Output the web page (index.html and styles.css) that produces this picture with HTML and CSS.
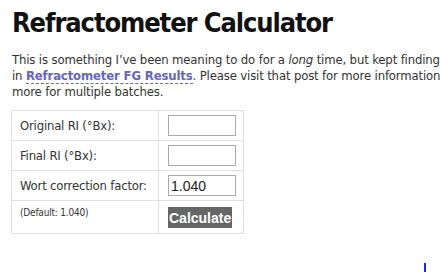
FILE: index.html
```html
<!DOCTYPE html>
<html>
<head>
  <title>Refractometer Calculator</title>
  <link rel="stylesheet" href="styles.css">
</head>
<body>
  <div class="page">
    <h1>Refractometer Calculator</h1>
    <p class="intro">This is something I’ve been meaning to do for a <em>long</em> time, but kept finding<br>in <a href="#">Refractometer FG Results</a>. Please visit that post for more information<br>more for multiple batches.</p>
    <table class="calc">
      <tr>
        <td class="label">Original RI (°Bx):</td>
        <td class="field"><input type="text" id="ori"></td>
      </tr>
      <tr>
        <td class="label">Final RI (°Bx):</td>
        <td class="field"><input type="text" id="fri"></td>
      </tr>
      <tr>
        <td class="label">Wort correction factor:</td>
        <td class="field"><input type="text" id="wcf" value="1.040"></td>
      </tr>
      <tr>
        <td class="note">(Default: 1.040)</td>
        <td class="field"><button id="calc">Calculate</button></td>
      </tr>
    </table>
  </div>
  <div class="marker"></div>
</body>
</html>
```

FILE: styles.css
```css
body {
    margin: 0;
    padding: 0;
    background: #fff;
    font-family: "DejaVu Sans Condensed", "DejaVu Sans", sans-serif;
    color: #333;
    overflow: hidden;
}
.page {
    padding: 0 0 0 12px;
}
h1 {
    margin: 0;
    padding-top: 8px;
    font-size: 27px;
    line-height: 30px;
    font-weight: bold;
    letter-spacing: -1.1px;
    color: #111;
}
.intro {
    margin: 14px 0 0 0;
    font-size: 13px;
    line-height: 16px;
    letter-spacing: -0.15px;
    white-space: nowrap;
}
.intro em {
    font-style: italic;
}
.intro a {
    color: #6666bb;
    font-weight: bold;
    text-decoration: none;
    border-bottom: 1px dashed #6666bb;
}
.calc {
    margin: 10px 0 0 -1px;
    border-collapse: collapse;
    border: 1px solid #e0e0e0;
}
.calc td {
    border: 1px solid #e0e0e0;
    height: 29px;
    padding: 0 8px;
    font-size: 13px;
    white-space: nowrap;
}
.calc td.label {
    width: 130px;
    letter-spacing: -0.2px;
}
.calc td.field {
    width: 67px;
    padding: 0 7px 0 9px;
}
.calc td.note {
    font-size: 10px;
    vertical-align: top;
    padding-top: 6px;
    height: 26px;
    letter-spacing: -0.2px;
}
.calc input {
    width: 62px;
    height: 17px;
    margin: 0;
    padding: 1px 2px;
    border: 1px solid #aaa;
    font-family: "Liberation Sans", Arial, sans-serif;
    font-size: 14px;
    color: #222;
}
.calc button {
    margin: 1px 0 0 0;
    padding: 0 1px;
    height: 21px;
    border: none;
    background: #666;
    color: #fff;
    font-family: "Liberation Sans", Arial, sans-serif;
    font-size: 14px;
    font-weight: bold;
}
.marker {
    position: absolute;
    left: 424px;
    top: 263px;
    width: 2px;
    height: 9px;
    background: #1a2ecc;
}
```
